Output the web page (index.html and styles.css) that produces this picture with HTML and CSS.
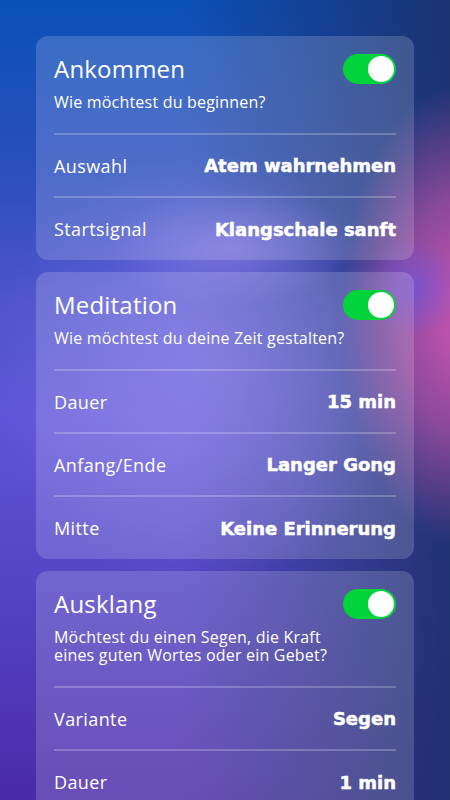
FILE: index.html
```html
<!DOCTYPE html>
<html lang="de">
<head>
    <meta charset="UTF-8">
    <meta name="viewport" content="width=device-width, initial-scale=1.0">
    <title>Meditation - Einstellungen</title>
    <link rel="stylesheet" href="styles.css">
</head>
<body>
    <main class="settings">
        <section class="card">
            <div class="card-head">
                <div class="title-row">
                    <h2>Ankommen</h2>
                    <span class="toggle on"><span class="knob"></span></span>
                </div>
                <p>Wie möchtest du beginnen?</p>
            </div>
            <div class="row">
                <span class="label">Auswahl</span>
                <span class="value">Atem wahrnehmen</span>
            </div>
            <div class="row">
                <span class="label">Startsignal</span>
                <span class="value">Klangschale sanft</span>
            </div>
        </section>

        <section class="card">
            <div class="card-head">
                <div class="title-row">
                    <h2>Meditation</h2>
                    <span class="toggle on"><span class="knob"></span></span>
                </div>
                <p>Wie möchtest du deine Zeit gestalten?</p>
            </div>
            <div class="row">
                <span class="label">Dauer</span>
                <span class="value">15 min</span>
            </div>
            <div class="row">
                <span class="label">Anfang/Ende</span>
                <span class="value">Langer Gong</span>
            </div>
            <div class="row">
                <span class="label">Mitte</span>
                <span class="value">Keine Erinnerung</span>
            </div>
        </section>

        <section class="card">
            <div class="card-head">
                <div class="title-row">
                    <h2>Ausklang</h2>
                    <span class="toggle on"><span class="knob"></span></span>
                </div>
                <p>Möchtest du einen Segen, die Kraft<br>eines guten Wortes oder ein Gebet?</p>
            </div>
            <div class="row">
                <span class="label">Variante</span>
                <span class="value">Segen</span>
            </div>
            <div class="row">
                <span class="label">Dauer</span>
                <span class="value">1 min</span>
            </div>
        </section>
    </main>
</body>
</html>
```

FILE: styles.css
```css
html, body {
    height: 100%;
}
body {
    margin: 0;
    font-family: "Open Sans", Lato, sans-serif;
    color: white;
    overflow: hidden;
    background:
        radial-gradient(ellipse 120px 60px at 230px 248px, rgba(150, 130, 235, 0.55), transparent),
        radial-gradient(circle 50px at 412px 288px, rgba(115, 85, 215, 0.8), transparent),
        radial-gradient(ellipse 120px 230px at 460px 315px, rgb(185, 82, 170) 15%, rgba(185, 82, 170, 0.7) 50%, transparent),
        radial-gradient(ellipse 210px 220px at 200px 370px, rgba(120, 110, 228, 0.7), transparent),
        linear-gradient(to right, transparent 40%, rgba(28, 48, 105, 0.9) 100%),
        linear-gradient(180deg, #0a50b8 0%, #2c4fbe 22%, #5054cc 38%, #5e54d8 52%, #5446c6 72%, #4a2aa8 100%);
}
.settings {
    display: flex;
    flex-direction: column;
    gap: 12px;
    padding: 36px 36px 0;
}
.card {
    background: rgba(255, 255, 255, 0.17);
    border-radius: 12px;
    padding: 0 18px;
}
.card-head {
    padding: 18px 0 22px;
    border-bottom: 2px solid rgba(255, 255, 255, 0.22);
}
.title-row {
    display: flex;
    justify-content: space-between;
    align-items: center;
}
.title-row h2 {
    margin: 0;
    font-size: 24px;
    font-weight: 400;
    line-height: 30px;
    letter-spacing: 0.2px;
}
.card-head p {
    margin: 9px 0 0;
    font-size: 16px;
    line-height: 18px;
    letter-spacing: 0.2px;
}
.toggle {
    width: 53px;
    height: 30px;
    border-radius: 15px;
    background: #00d43b;
    display: flex;
    align-items: center;
    justify-content: flex-end;
    padding: 0 2px;
    box-sizing: border-box;
    flex-shrink: 0;
}
.knob {
    width: 26px;
    height: 26px;
    border-radius: 50%;
    background: white;
}
.row {
    display: flex;
    justify-content: space-between;
    align-items: center;
    height: 61px;
    font-size: 18px;
}
.row + .row {
    border-top: 2px solid rgba(255, 255, 255, 0.22);
}
.row:last-child {
    height: 62px;
}
.label {
    letter-spacing: 0.4px;
}
.value {
    font-family: "DejaVu Sans", sans-serif;
    font-weight: 700;
    -webkit-text-stroke: 0.5px white;
}
```
